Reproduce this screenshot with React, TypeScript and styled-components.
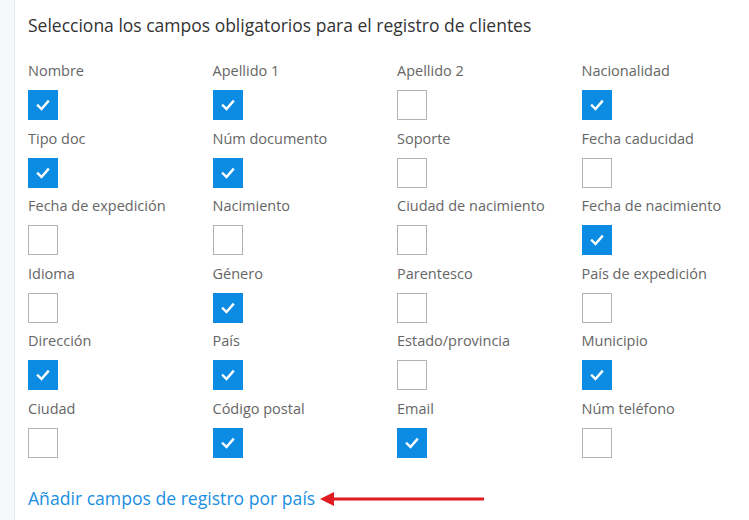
import React from 'react';
import styled, { createGlobalStyle } from 'styled-components';

const GlobalStyle = createGlobalStyle`
  html, body {
    margin: 0;
    padding: 0;
    background: #f7f8fa;
  }
  body {
    font-family: "Open Sans", "Liberation Sans", sans-serif;
  }
`;

const Page = styled.div`
  display: flex;
  height: 520px;
  overflow: hidden;
`;

const Gutter = styled.div`
  width: 14px;
  flex-shrink: 0;
  background: #f7f8fa;
`;

const Panel = styled.div`
  flex: 1;
  background: #fff;
  border-left: 1px solid #e6e8eb;
  padding: 13px 0 0 13px;
`;

const Title = styled.h2`
  margin: 0 0 24px;
  font-size: 17.5px;
  line-height: 24px;
  font-weight: 400;
  color: #333;
`;

const Grid = styled.div`
  display: grid;
  grid-template-columns: repeat(4, 184.5px);
  row-gap: 8.5px;
`;

const Field = styled.label`
  display: flex;
  flex-direction: column;
  align-items: flex-start;
  gap: 9px;
`;

const FieldName = styled.span`
  font-size: 14.5px;
  line-height: 20px;
  color: #666;
  white-space: nowrap;
`;

const Box = styled.span<{ checked?: boolean }>`
  box-sizing: border-box;
  width: 30px;
  height: 30px;
  display: flex;
  align-items: center;
  justify-content: center;
  background: ${p => (p.checked ? '#0b8ce2' : '#fff')};
  border: 1px solid ${p => (p.checked ? '#0b8ce2' : '#b3b3b3')};
`;

const Footer = styled.div`
  display: flex;
  align-items: center;
  margin-top: 28px;
`;

const AddLink = styled.a`
  font-size: 17.6px;
  line-height: 24px;
  color: #1a8fe3;
  text-decoration: none;
  cursor: pointer;
`;

const Arrow = styled.svg`
  margin-left: 5px;
  margin-top: 2px;
`;

const fields: [string, boolean][] = [
  ['Nombre', true],
  ['Apellido 1', true],
  ['Apellido 2', false],
  ['Nacionalidad', true],
  ['Tipo doc', true],
  ['Núm documento', true],
  ['Soporte', false],
  ['Fecha caducidad', false],
  ['Fecha de expedición', false],
  ['Nacimiento', false],
  ['Ciudad de nacimiento', false],
  ['Fecha de nacimiento', true],
  ['Idioma', false],
  ['Género', true],
  ['Parentesco', false],
  ['País de expedición', false],
  ['Dirección', true],
  ['País', true],
  ['Estado/provincia', false],
  ['Municipio', true],
  ['Ciudad', false],
  ['Código postal', true],
  ['Email', true],
  ['Núm teléfono', false],
];

const Check = () => (
  <svg width="14" height="12" viewBox="0 0 14 12">
    <path d="M2 6.5 L5.5 10 L12 2.5" fill="none" stroke="#fff" strokeWidth="2.4" strokeLinecap="square" />
  </svg>
);

export default function App() {
  return (
    <Page>
      <GlobalStyle />
      <Gutter />
      <Panel>
        <Title>Selecciona los campos obligatorios para el registro de clientes</Title>
        <Grid>
          {fields.map(([name, checked]) => (
            <Field key={name}>
              <FieldName>{name}</FieldName>
              <Box checked={checked}>{checked && <Check />}</Box>
            </Field>
          ))}
        </Grid>
        <Footer>
          <AddLink>Añadir campos de registro por país</AddLink>
          <Arrow width="164" height="14" viewBox="0 0 164 14">
            <polygon points="0,7 14,0 14,14" fill="#e11b22" />
            <rect x="13" y="5.5" width="151" height="3" fill="#e11b22" />
          </Arrow>
        </Footer>
      </Panel>
    </Page>
  );
}
